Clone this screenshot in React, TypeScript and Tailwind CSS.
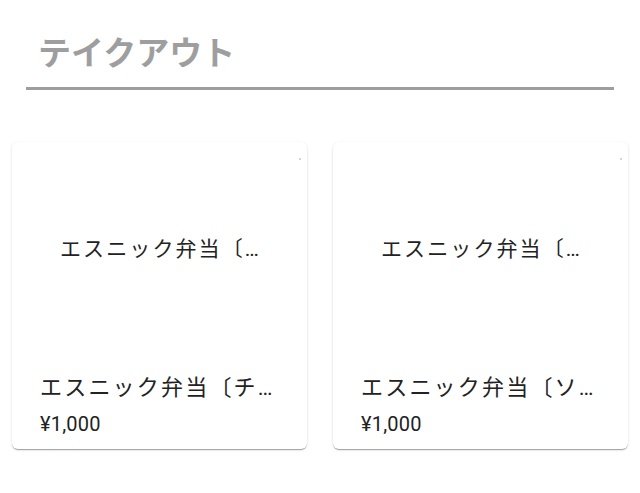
const items = [
  { id: 1, name: "エスニック弁当〔チキン〕", price: 1000 },
  { id: 2, name: "エスニック弁当〔ソーセージ〕", price: 1000 },
];

const jp = "font-['Roboto','Noto_Sans_CJK_JP',sans-serif]";

function ItemCard({ name, price }: { name: string; price: number }) {
  return (
    <div className="bg-white rounded-md overflow-hidden shadow-[0_2px_1px_-1px_rgba(0,0,0,0.2),0_1px_1px_0_rgba(0,0,0,0.14),0_1px_3px_0_rgba(0,0,0,0.12)]">
      {/* image failed to load: only its alt text shows */}
      <div className="relative h-[216px] flex items-center justify-center px-[48px]">
        <span className="absolute top-[16px] right-[6px] w-[2px] h-[2px] bg-gray-300" />
        <span className="truncate text-[21px] tracking-[0.1em] text-[#222]">{name}</span>
      </div>
      <div className="px-7 pt-[14px] pb-[12px]">
        <div className="truncate text-[22px] leading-[32px] tracking-[0.1em] text-[#222]">
          {name}
        </div>
        <div className="mt-[7px] font-['Roboto',sans-serif] text-[20px] leading-[26px] tracking-[0.01em] text-[#222]">
          ¥{price.toLocaleString("ja-JP")}
        </div>
      </div>
    </div>
  );
}

export default function App() {
  return (
    <main className={`min-h-[493px] bg-white ${jp}`}>
      <div className="px-[26px] pt-[30px]">
        <h1 className="pl-3 pb-[9px] text-[33px] leading-[48px] font-bold text-[#9e9e9e] border-b-[3px] border-[#9e9e9e]">
          テイクアウト
        </h1>
      </div>
      <div className="grid grid-cols-2 gap-[26px] px-3 mt-[52px]">
        {items.map((item) => (
          <ItemCard key={item.id} name={item.name} price={item.price} />
        ))}
      </div>
    </main>
  );
}
